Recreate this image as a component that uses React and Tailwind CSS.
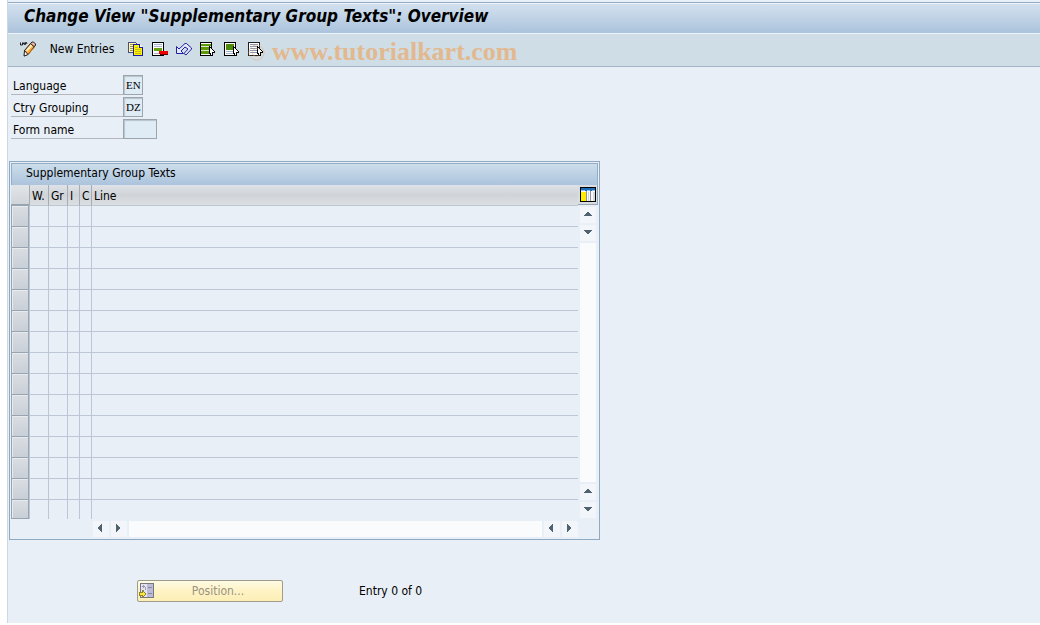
import React from 'react'

const rows = Array.from({ length: 15 }, (_, i) => i)

const columns = [
  { name: "W.", width: "w-[19px]" },
  { name: "Gr", width: "w-[19px]" },
  { name: "I", width: "w-3" },
  { name: "C", width: "w-3" },
  { name: "Line", width: "" },
]

const fields = [
  { id: "language", label: "Language", value: "EN", width: "w-5" },
  { id: "grouping", label: "Ctry Grouping", value: "DZ", width: "w-5" },
  { id: "form", label: "Form name", value: "", width: "w-[34px]" },
]

const Icon = ({ children }) => (
  <svg width="16" height="16" viewBox="0 0 16 16" fill="none" shapeRendering="crispEdges" aria-hidden="true">
    {children}
  </svg>
)

const Pointer = () => (
  <>
    <path d="M9 5h1v1h1v1h1v1h1v1h1v1h1v2h-2v3h-3v-2H9z" fill="#000" />
    <path d="M10 7h1v1h1v1h1v1h1v1h-2v3h-1v-2h-1z" fill="#fff" />
  </>
)

const ChangeIcon = () => (
  <svg width="16" height="16" viewBox="0 0 16 16" fill="none" aria-hidden="true">
    <path d="M0.500 1.500v2.500h2v-2.500M3 3.500l1-2 1 2.500 1-3 1 2" stroke="#222" />
    <path d="M4.500 9.500l6-7 4 3-6 7.500-4 2z" fill="#f8a832" stroke="#222" />
    <path d="M6.500 10l5.500-6" stroke="#ffedc0" strokeWidth="2" />
    <path d="M10.500 2.500l1.500-1.500h1.500l2 2v1.500l-1.500 1z" fill="#f4b8a0" stroke="#222" />
    <path d="M4.500 9.500l3.500 4-4 1.500z" fill="#fff" stroke="#222" />
    <path d="M8 13.500l6-7" stroke="#d86c10" />
  </svg>
)

const CopyIcon = () => (
  <Icon>
    <path d="M0.500 1.500h7l2 2v8h-9z" fill="#fff8a0" stroke="#4a4a8c" />
    <path d="M2 3.500h3M2 5.500h3M2 7.500h3M2 9.500h3" stroke="#99993a" />
    <path d="M5.500 3.500h6l3 3v8h-9z" fill="#fff200" stroke="#1c1ca8" />
    <path d="M11 4h1v2h2v1h-3z" fill="#1c1ca8" />
    <path d="M12 4h1v1h1v1h-2z" fill="#fff" />
    <path d="M7 6.500h3M7 8.500h6M7 10.500h6M7 12.500h6" stroke="#c4bc20" />
  </Icon>
)

const DeleteIcon = () => (
  <Icon>
    <path d="M0.500 1.500h11v13h-11z" fill="#fff" stroke="#000" />
    <path d="M2 3.500h8M2 5.500h8M2 12.500h5" stroke="#a4b4d0" />
    <path d="M2 7h8v3h-8z" fill="#64a010" />
    <path d="M7 10h9v3h-9z" fill="#f00000" />
    <path d="M8 13.500h8" stroke="#600" />
  </Icon>
)

const UndoIcon = () => (
  <svg width="16" height="16" viewBox="0 0 16 16" fill="none" aria-hidden="true">
    <path d="M0.500 5.500v7h7l-2.500-2.500 4-4 3 2-4 4.500 2 1.500 5.500-6v-1l-5-4.500h-1.500l-6 5.500z" fill="#e4e8fc" stroke="#2020a0" />
  </svg>
)

const SelectAllIcon = () => (
  <Icon>
    <path d="M0.500 1.500h11v13h-11z" fill="#fff" stroke="#000" />
    <path d="M1 3h10v2h-10zM1 6h10v3h-10zM1 10h10v3h-10z" fill="#5c9a0c" />
    <path d="M1 5.500h10M1 9.500h10" stroke="#dce8c0" />
    <Pointer />
  </Icon>
)

const SelectBlockIcon = () => (
  <Icon>
    <path d="M0.500 1.500h11v13h-11z" fill="#fff" stroke="#000" />
    <path d="M2 3h8v6h-8z" fill="#4c8a08" />
    <path d="M2 10.500h7M2 12.500h7" stroke="#a4b4d0" />
    <Pointer />
  </Icon>
)

const DeselectIcon = () => (
  <Icon>
    <path d="M0.500 1.500h11v13h-11z" fill="#fff" stroke="#222" />
    <path d="M2 3.500h8M2 5.500h8M2 7.500h7M2 9.500h7M2 11.500h7" stroke="#8494ac" />
    <Pointer />
  </Icon>
)

const ConfigIcon = () => (
  <Icon>
    <path d="M0 0h16v15H0z" fill="#000" />
    <path d="M1 1h14v13H1z" fill="#f8f8f8" />
    <path d="M1 1h14v3H1z" fill="#1c6cb8" />
    <path d="M1 3.500h4M7 3.500h3M12 3.500h3" stroke="#8cc4f0" />
    <path d="M1 5h5v9H1z" fill="#ffec00" />
    <path d="M6 4h1v10H6zM10 4h1v10h-1z" fill="#8c9098" />
    <path d="M8 5h1v9H8zM13 5h2v9h-2z" fill="#d4d6dc" />
  </Icon>
)

const PositionIcon = () => (
  <Icon>
    <path d="M1.500 0.500h13v14h-13z" fill="#e4e4f0" stroke="#77777f" />
    <path d="M8 1h6v13h-6z" fill="#bcbcd8" />
    <path d="M3 3.500h3M3 7.500h2M9 4.500h4M9 10.500h4" stroke="#8888a0" />
    <path d="M4.500 2v3M6.500 4v3" stroke="#a0a0b0" />
    <path d="M0 9h3V7h1v1h1v1h1v1h1v2H6v1H5v1H4v1H3v-2H0z" fill="#8c8430" />
    <path d="M1 10h3V9h1v1h1v2H5v1H4v-1H1z" fill="#ffe840" />
  </Icon>
)

const arrows = {
  up: "M7 5h2v1h1v1h1v1h1v1H4V8h1V7h1V6h1z",
  down: "M4 5h8v1h-1v1h-1v1H9v1H7V8H6V7H5V6H4z",
  left: "M8 3h1v8H8v-1H7V9H6V8H5V6h1V5h1V4h1z",
  right: "M5 3h1v1h1v1h1v1h1v2H8v1H7v1H6v1H5z",
}

const ScrollButton = ({ dir }) => (
  <button aria-label={"Scroll " + dir} className="size-4 shrink-0 bg-[#f2f6fa]">
    <svg width="16" height="16" viewBox="0 0 16 16" shapeRendering="crispEdges" aria-hidden="true">
      <path d={arrows[dir]} fill="#50626f" />
    </svg>
  </button>
)

const toolbar = [
  { name: "Copy as", icon: <CopyIcon /> },
  { name: "Delete", icon: <DeleteIcon /> },
  { name: "Undo change", icon: <UndoIcon /> },
  { name: "Select all", icon: <SelectAllIcon /> },
  { name: "Select block", icon: <SelectBlockIcon /> },
  { name: "Deselect all", icon: <DeselectIcon /> },
]

const App = () => {
  return (
    <div className="bg-white pl-[7px] font-['DejaVu_Sans_Condensed','DejaVu_Sans',sans-serif] text-xs text-black">
      <div className="border-l border-[#ccd8e4] bg-[#e8eff6] pt-0.5 pb-[21px]">
        {/* Title */}
        <header className="border-t border-[#94adc4]">
          <h1 className="flex h-[31px] items-center border-y border-[#eef4fa] bg-linear-to-b from-[#d3e1ee] to-[#abc3dc] pb-1 pl-4 text-[17px] font-bold italic whitespace-nowrap">
            Change View "Supplementary Group Texts": Overview
          </h1>
        </header>

        {/* Toolbar */}
        <div className="relative flex h-[33px] items-center border-b border-[#a0b4c6] bg-[#cfdde7] pb-0.5 pl-3">
          <button aria-label="Display / Change"><ChangeIcon /></button>
          <button className="ml-3 w-[68px] whitespace-nowrap">New Entries</button>
          <div className="ml-3 flex gap-2">
            {toolbar.map((t) => (
              <button key={t.name} aria-label={t.name}>{t.icon}</button>
            ))}
          </div>
          <svg className="absolute top-2.5 left-[240px]" width="17" height="17" viewBox="0 0 17 17" fill="none" stroke="#e8a870" strokeOpacity="0.5" aria-hidden="true">
            <circle cx="8.500" cy="8.500" r="7.500" />
            <path d="M11.500 6a4 4 0 1 0 0 5" />
          </svg>
          <span className="absolute top-0.5 left-[264px] font-['Liberation_Serif',serif] text-[26px] leading-8 font-bold text-[#e2b98f]">
            www.tutorialkart.com
          </span>
        </div>

        {/* Key fields */}
        <div className="flex flex-col gap-0.5 pt-2 pl-[3px]">
          {fields.map((f) => (
            <div key={f.id} className="flex h-5">
              <label htmlFor={f.id} className="w-28 border-b border-[#b4b8bc] pl-0.5 leading-[22px]">{f.label}</label>
              <input
                id={f.id}
                defaultValue={f.value}
                readOnly
                className={"h-5 border border-[#9ca4ac] bg-[#dfebf5] pl-0.5 font-['Liberation_Serif',serif] text-[11px] shadow-[inset_1px_1px_1px_#b8c2cc] outline-none " + f.width}
              />
            </div>
          ))}
        </div>

        {/* Table */}
        <section className="mt-[22px] ml-px max-w-[591px] border border-[#8eaac2] p-px">
          <h2 className="h-[22px] border border-b-0 border-[#94adc4] bg-linear-to-b from-[#cddeeb] to-[#abc3dc] pl-3.5 leading-[18px]">
            Supplementary Group Texts
          </h2>
          <div className="flex">
            <table className="min-w-0 flex-1 table-fixed border-separate border-spacing-0">
              <thead>
                <tr className="h-[21px]">
                  <th aria-label="Select" className="w-[18px] border-b-2 border-[#98a4b2] bg-linear-to-b from-[#e2e5e8] to-[#d0d5da] p-0" />
                  {columns.map((c) => (
                    <th key={c.name} className={"border-b border-l border-b-[#bfc7d3] border-l-[#a4acb6] bg-linear-to-b from-[#dfe2e6] via-[#d0d4d8] to-[#dcdfe2] p-0 pt-0.5 pl-0.5 text-left font-normal whitespace-nowrap " + c.width}>
                      {c.name}
                    </th>
                  ))}
                </tr>
              </thead>
              <tbody>
                {rows.map((r) => (
                  <tr key={r} className="h-[21px] last:h-[19px]">
                    <td className="border border-t-0 border-[#98a4b2] bg-linear-to-b from-[#dadee3] to-[#c9cfd7] p-0 shadow-[inset_1px_1px_0_#e8ebee]" />
                    {columns.map((c) => (
                      <td key={c.name} className={"border-l border-[#bcc6d6] p-0 " + (r < rows.length - 1 ? "border-b" : "")} />
                    ))}
                  </tr>
                ))}
              </tbody>
            </table>
            <div className="flex w-5 flex-col items-center">
              <button aria-label="Table settings" className="mb-0.5 flex h-5 w-full items-center justify-center border-r border-b border-[#98a4b2] bg-[#d9dde1]">
                <ConfigIcon />
              </button>
              <div className="flex flex-1 flex-col gap-0.5 pb-px">
                <ScrollButton dir="up" />
                <ScrollButton dir="down" />
                <div className="flex-1 bg-[#fafbfc]" />
                <ScrollButton dir="up" />
                <ScrollButton dir="down" />
              </div>
            </div>
          </div>
          <div className="flex h-[19px] items-center gap-0.5 pr-5 pl-[82px]">
            <ScrollButton dir="left" />
            <ScrollButton dir="right" />
            <div className="h-4 flex-1 bg-[#fafbfc]" />
            <ScrollButton dir="left" />
            <ScrollButton dir="right" />
          </div>
        </section>

        {/* Footer */}
        <div className="mt-10 flex items-center pl-[129px]">
          <button disabled className="flex h-[22px] w-[146px] items-center rounded-xs border border-[#a09c8c] bg-linear-to-b from-[#fffbe4] via-[#fff3c4] to-[#fdeeb6] px-px text-[#979386]">
            <PositionIcon />
            <span className="flex-1 text-center">Position...</span>
          </button>
          <span className="ml-[76px]">Entry 0 of 0</span>
        </div>
      </div>
    </div>
  )
}

export default App
